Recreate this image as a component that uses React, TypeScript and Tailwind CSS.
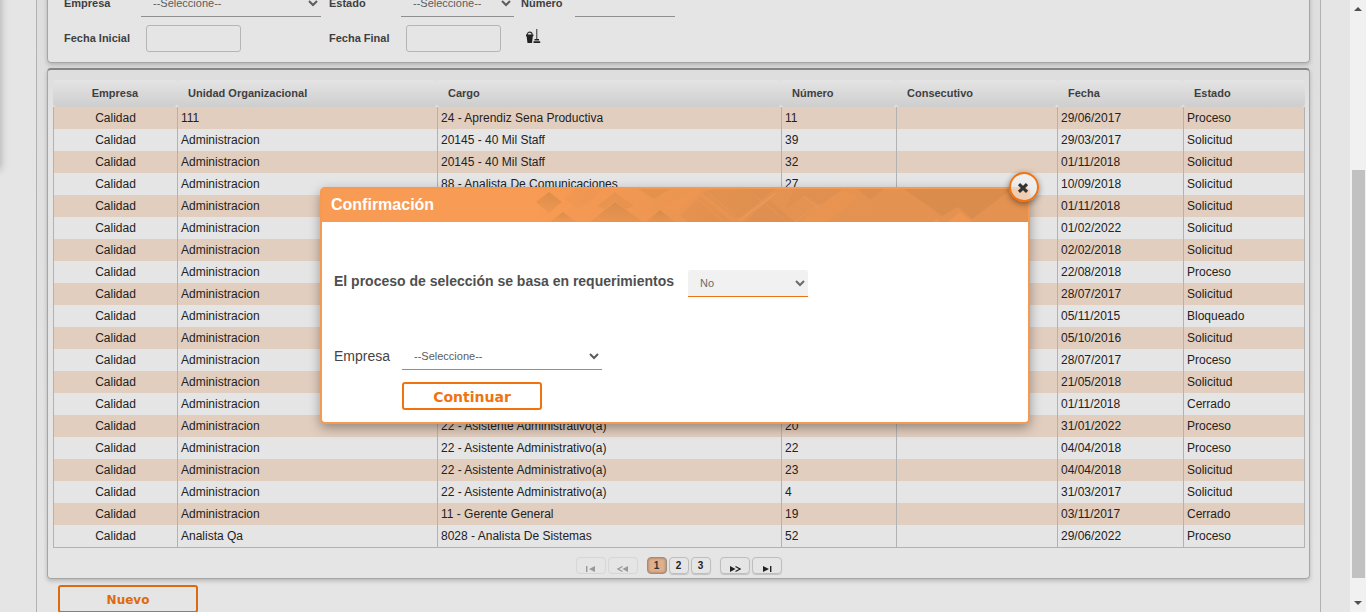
import type { ReactNode } from 'react';

const A = 'Administracion';
const ASIS = '22 - Asistente Administrativo(a)';

const rows: string[][] = [
  ['Calidad', '111', '24 - Aprendiz Sena Productiva', '11', '', '29/06/2017', 'Proceso'],
  ['Calidad', A, '20145 - 40 Mil Staff', '39', '', '29/03/2017', 'Solicitud'],
  ['Calidad', A, '20145 - 40 Mil Staff', '32', '', '01/11/2018', 'Solicitud'],
  ['Calidad', A, '88 - Analista De Comunicaciones', '27', '', '10/09/2018', 'Solicitud'],
  ['Calidad', A, '', '', '', '01/11/2018', 'Solicitud'],
  ['Calidad', A, '', '', '', '01/02/2022', 'Solicitud'],
  ['Calidad', A, '', '', '', '02/02/2018', 'Solicitud'],
  ['Calidad', A, '', '', '', '22/08/2018', 'Proceso'],
  ['Calidad', A, '', '', '', '28/07/2017', 'Solicitud'],
  ['Calidad', A, '', '', '', '05/11/2015', 'Bloqueado'],
  ['Calidad', A, '', '', '', '05/10/2016', 'Solicitud'],
  ['Calidad', A, '', '', '', '28/07/2017', 'Proceso'],
  ['Calidad', A, '', '', '', '21/05/2018', 'Solicitud'],
  ['Calidad', A, '', '', '', '01/11/2018', 'Cerrado'],
  ['Calidad', A, ASIS, '20', '', '31/01/2022', 'Proceso'],
  ['Calidad', A, ASIS, '22', '', '04/04/2018', 'Proceso'],
  ['Calidad', A, ASIS, '23', '', '04/04/2018', 'Solicitud'],
  ['Calidad', A, ASIS, '4', '', '31/03/2017', 'Solicitud'],
  ['Calidad', A, '11 - Gerente General', '19', '', '03/11/2017', 'Cerrado'],
  ['Calidad', 'Analista Qa', '8028 - Analista De Sistemas', '52', '', '29/06/2022', 'Proceso'],
];

const headers = ['Empresa', 'Unidad Organizacional', 'Cargo', 'Número', 'Consecutivo', 'Fecha', 'Estado'];

const labelClass = 'text-[11px] font-bold text-[#3f3f3f]';
const lineSelect = 'h-[27px] border-b border-[#8f8f8f] bg-transparent px-2 text-[11px] text-[#5c5c5c] outline-none';
const dateInput = 'ml-[5px] h-[27px] w-[95px] rounded-[3px] border border-[#b5b5b5] bg-transparent px-2 text-[11px] outline-none';

function CleanIcon() {
  return (
    <svg width="16" height="16" viewBox="0 0 16 16" aria-hidden="true">
      <path d="M2.2 6 C2.2 2.2 7.2 2.2 7.2 6" fill="none" stroke="#333" strokeWidth="1.1" />
      <path d="M1 5.5 H8.4 V7.2 H7.8 L7 14 H2.5 L1.6 7.2 H1 Z" fill="#222" />
      <path d="M11 0 H12.4 V10 H11 Z" fill="#666" />
      <path d="M9.5 10 H14 V11.5 H9.5 Z M8.5 12.2 H15.2 V14 H8.5 Z" fill="#222" />
    </svg>
  );
}

function FilterForm() {
  return (
    <form className="-mt-4 rounded-b-[4px] border border-[#a5a5a5] bg-[#e5e5e5] pt-1 pb-[10px] pl-4 shadow-[0_2px_4px_rgba(0,0,0,0.2)]">
      <div className="grid grid-cols-[77px_188px_72px_120px_54px_100px] items-center gap-y-2">
        <label htmlFor="f-empresa" className={labelClass}>Empresa</label>
        <select id="f-empresa" className={`${lineSelect} w-[180px]`}><option>--Seleccione--</option></select>
        <label htmlFor="f-estado" className={labelClass}>Estado</label>
        <select id="f-estado" className={`${lineSelect} w-[113px]`}><option>--Seleccione--</option></select>
        <label htmlFor="f-numero" className={labelClass}>Número</label>
        <input id="f-numero" className="h-7 w-[100px] border-b border-[#8f8f8f] bg-transparent text-[11px] outline-none" />
        <label htmlFor="f-inicial" className={labelClass}>Fecha Inicial</label>
        <input id="f-inicial" className={dateInput} />
        <label htmlFor="f-final" className={labelClass}>Fecha Final</label>
        <input id="f-final" className={dateInput} />
        <button type="button" aria-label="Limpiar" className="ml-1 w-4 pb-1"><CleanIcon /></button>
      </div>
    </form>
  );
}

function PageButton({ children, state = 'normal', wide = false, label }: { children: ReactNode; state?: 'normal' | 'active' | 'disabled'; wide?: boolean; label?: string }) {
  const look = {
    normal: 'border-[#bdbdbd] text-[#222] shadow-[0_1px_1px_rgba(0,0,0,0.15)]',
    active: 'border-[#9c8d82] bg-[#dfb08d] text-[#333] shadow-[inset_0_0_3px_rgba(0,0,0,0.35)]',
    disabled: 'border-[#d6d6d6] text-[#999]',
  }[state];
  return (
    <button type="button" aria-label={label} disabled={state === 'disabled'} className={`flex h-[17px] items-center justify-center rounded-[4px] border text-[10px] font-bold ${wide ? 'w-[30px]' : 'w-5'} ${look}`}>
      {children}
    </button>
  );
}

function PagerIcon({ d, line }: { d: string; line?: string }) {
  return (
    <svg width="12" height="8" viewBox="0 0 12 8" className="mt-[6px]" aria-hidden="true">
      <path d={d} fill="currentColor" />
      {line && <path d={line} fill="none" stroke="currentColor" strokeWidth="1.2" />}
    </svg>
  );
}

function ResultsPanel() {
  return (
    <section className="mt-[5px] rounded-[4px] border border-t-2 border-[#a5a5a5] border-t-[#858585] bg-linear-to-b from-[#dedede] to-[#e5e5e5] to-[60px] px-[5px] pt-[10px] pb-1 shadow-[0_2px_4px_rgba(0,0,0,0.2)]">
      <table className="w-full table-fixed border-separate border-spacing-0 text-[12px] leading-[14px] text-[#222]">
        <colgroup>
          <col className="w-[124px]" />
          <col className="w-[260px]" />
          <col className="w-[344px]" />
          <col className="w-[115px]" />
          <col className="w-[161px]" />
          <col className="w-[126px]" />
          <col className="w-[122px]" />
        </colgroup>
        <thead>
          <tr className="h-[27px]">
            {headers.map((h, i) => (
              <th key={h} className={`rounded-[4px] bg-linear-to-b from-[#e4e4e4] to-[#cecece] p-0 pb-[2px] text-[11px] font-bold text-[#3f3f3f] ${i === 0 ? 'text-center' : 'pl-[11px] text-left'}`}>{h}</th>
            ))}
          </tr>
        </thead>
        <tbody>
          {rows.map((r, n) => (
            <tr key={n} className={`${n === rows.length - 1 ? 'h-[23px]' : 'h-[22px]'} ${n % 2 ? 'bg-[#e5e5e5]' : 'bg-[#e2cebf]'}`}>
              {r.map((c, i) => (
                <td key={i} className={`border-l border-[#b2b2b2] p-0 ${i === 0 ? 'text-center' : 'pl-[3px]'} ${i === 6 ? 'border-r' : ''} ${n === rows.length - 1 ? 'border-b' : ''}`}>{c}</td>
              ))}
            </tr>
          ))}
        </tbody>
      </table>
      <nav aria-label="Paginación" className="mt-[9px] flex h-[17px] justify-center gap-[2px]">
        <PageButton wide state="disabled" label="Primera"><PagerIcon d="M1 1H2.4V7H1Z M10 1V7L4 4Z" /></PageButton>
        <PageButton wide state="disabled" label="Anterior"><PagerIcon d="M11 1V7L5.5 4Z" line="M5.5 1.5L1 4L5.5 6.5" /></PageButton>
        <span className="w-[5px]" />
        <PageButton state="active">1</PageButton>
        <PageButton>2</PageButton>
        <PageButton>3</PageButton>
        <span className="w-[5px]" />
        <PageButton wide label="Siguiente"><PagerIcon d="M1 1V7L6.5 4Z" line="M6.5 1.5L11 4L6.5 6.5" /></PageButton>
        <PageButton wide label="Última"><PagerIcon d="M2 1V7L8 4Z M9 1H10.4V7H9Z" /></PageButton>
      </nav>
    </section>
  );
}

function BannerPattern() {
  return (
    <svg className="absolute inset-y-0 right-0 h-full w-[496px]" viewBox="0 0 496 33" preserveAspectRatio="none" aria-hidden="true">
      <defs>
        <linearGradient id="band" x1="0" x2="1">
          <stop offset="0" stopColor="#a87848" stopOpacity="0" />
          <stop offset="0.45" stopColor="#a87848" stopOpacity="0.24" />
          <stop offset="1" stopColor="#a87848" stopOpacity="0.26" />
        </linearGradient>
        <linearGradient id="peak" x1="0" x2="0" y1="0" y2="1">
          <stop offset="0" stopColor="#b87a40" stopOpacity="0.4" />
          <stop offset="1" stopColor="#b87a40" stopOpacity="0.12" />
        </linearGradient>
      </defs>
      <rect width="496" height="33" fill="url(#band)" />
      <g fill="url(#peak)">
        <path d="M4 13L17 3L30 13L17 24Z" />
        <path d="M18 33L31 23L44 33Z" />
        <path d="M58 33L83 13L111 33Z" />
        <path d="M114 33L128 21L143 33Z" />
      </g>
      <g fill="#b87a40">
        <path d="M32 10L44 0H70L58 12L46 20Z" fillOpacity="0.06" />
        <path d="M65 17L83 3L102 17L93 20L83 12L72 20Z" fillOpacity="0.14" />
        <path d="M106 0H138L122 10Z" fillOpacity="0.16" />
        <path d="M148 26L168 7L200 33H156Z" fillOpacity="0.1" />
        <path d="M170 4L205 30L243 0H180Z" fillOpacity="0.12" />
        <path d="M212 33L238 11L262 33Z" fillOpacity="0.12" />
        <path d="M254 20L272 6L288 16L310 0H262Z" fillOpacity="0.1" />
        <path d="M326 0H352L338 11Z" fillOpacity="0.16" />
        <path d="M372 0H480L440 30L426 18L410 27Z" fillOpacity="0.2" />
      </g>
      <path d="M416 33L428 23L440 33Z M400 33L405 30L408 33Z" fill="#f89a50" fillOpacity="0.6" />
      <path d="M132 20L160 0H172L146 22Z M280 22L312 0L326 8L296 33H270Z" fill="#f89a50" fillOpacity="0.2" />
      <g fill="none" stroke="#f7b077" strokeWidth="0.7">
        <path d="M208 31L243 5" strokeOpacity="0.7" />
        <path d="M176 4L208 31 M166 10L190 31 M222 6L252 30 M272 8L288 20 M262 33L290 14" strokeOpacity="0.3" />
      </g>
    </svg>
  );
}

function ConfirmDialog() {
  return (
    <div role="dialog" aria-labelledby="dlg-title" className="absolute top-[187px] left-1/2 w-[710px] -translate-x-1/2 rounded-[5px] border-2 border-[#f69a52] bg-white shadow-[0_4px_12px_rgba(0,0,0,0.35)]">
      <header className="relative flex h-[33px] items-center bg-[#f89b54] pb-[2px] pl-[9px]">
        <BannerPattern />
        <h2 id="dlg-title" className="relative text-[16px] leading-5 font-bold text-white">Confirmación</h2>
      </header>
      <button type="button" aria-label="Cerrar" className="absolute -top-[17px] -right-[11px] flex size-[30px] items-center justify-center rounded-full border-2 border-[#f0730f] bg-[#f5f5f5]/60 shadow-[0_2px_6px_rgba(0,0,0,0.45)]">
        <svg width="16" height="16" viewBox="0 0 16 16" className="mt-[2px] mr-[3px]" aria-hidden="true">
          <path d="M4 4.2L12 11.8M12 4.2L4 11.8" stroke="#333" strokeWidth="3.2" />
        </svg>
      </button>
      <div className="pt-12 pr-4 pb-3 pl-3 text-[14px] text-[#444]">
        <div className="flex items-start gap-[14px]">
          <label htmlFor="d-req" className="leading-[22px] font-bold text-[#4f4f4f]">El proceso de selección se basa en requerimientos</label>
          <select id="d-req" className="h-[27px] w-[120px] rounded-t-[3px] border-b border-[#f0730f] bg-[#f1f1f1] px-2 text-[11px] text-[#6b6b6b] outline-none"><option>No</option></select>
        </div>
        <div className="mt-[46px] grid grid-cols-[68px_200px] items-center gap-y-3">
          <label htmlFor="d-empresa">Empresa</label>
          <select id="d-empresa" className={lineSelect}><option>--Seleccione--</option></select>
          <button type="button" className="col-start-2 h-7 w-[140px] rounded-[3px] border-2 border-[#f0730f] pt-[2px] font-['DejaVu_Sans',sans-serif] text-[14px] leading-none font-bold text-[#f0730f]">Continuar</button>
        </div>
      </div>
    </div>
  );
}

export default function App() {
  return (
    <div className="flex h-screen overflow-hidden bg-[#e5e5e5] font-['Liberation_Sans',Arial,sans-serif]">
      <div className="relative min-w-0 flex-1 overflow-hidden pr-[29px] pl-9">
        <div className="absolute -top-4 -left-2 h-[186px] w-2 rounded shadow-[0_0_8px_rgba(0,0,0,0.3)]" />
        <main className="flow-root h-full border-x border-[#b2b2b2] bg-linear-to-b from-[#dedede] to-[#e5e5e5] px-[10px]">
          <FilterForm />
          <ResultsPanel />
          <button type="button" className="mt-[6px] ml-[11px] h-7 w-[140px] rounded-[3px] border-2 border-[#dc6a10] pt-[2px] font-['DejaVu_Sans',sans-serif] text-[12px] leading-none font-bold text-[#dc6a10]">Nuevo</button>
        </main>
        <ConfirmDialog />
      </div>
      <div aria-hidden="true" className="flex w-4 flex-col items-center bg-[#f1f1f1]">
        <svg width="16" height="17" viewBox="0 0 16 17"><path d="M4 11L8 7L12 11Z" fill="#505050" /></svg>
        <div className="mt-[153px] w-[13px] flex-1 bg-[#c1c1c1]" />
        <svg width="16" height="34" viewBox="0 0 16 34"><path d="M4 23L8 27L12 23Z" fill="#505050" /></svg>
      </div>
    </div>
  );
}
